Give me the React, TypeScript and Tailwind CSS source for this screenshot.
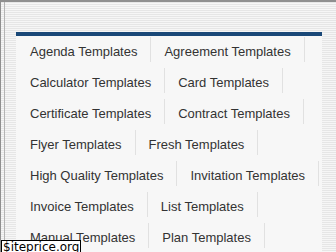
import React from "react";

const items = [
  "Agenda Templates",
  "Agreement Templates",
  "Calculator Templates",
  "Card Templates",
  "Certificate Templates",
  "Contract Templates",
  "Flyer Templates",
  "Fresh Templates",
  "High Quality Templates",
  "Invitation Templates",
  "Invoice Templates",
  "List Templates",
  "Manual Templates",
  "Plan Templates",
];

export default function App() {
  return (
    <div className="relative w-[336px] h-[252px] overflow-hidden border-t-2 border-l border-[#8f8f8f] bg-[repeating-linear-gradient(to_bottom,#e6e6e6_0px,#e6e6e6_1px,#f6f6f6_1px,#f6f6f6_2px)] font-['Liberation_Sans',Arial,sans-serif]">
      <div className="ml-[3px] h-full border-l border-[#b4b4b4] pl-[11px] pt-[30px]">
        {/* Template list panel */}
        <div className="w-[306px] overflow-hidden border-t-4 border-[#1a4878] bg-[#f7f7f7]">
          <ul className="flex w-[312px] flex-wrap pl-[1px]">
            {items.map((item) => (
              <li key={item} className="flex h-[31px]">
                <span className="px-[13px] text-[13px] leading-[31px] text-[#333] whitespace-nowrap">
                  {item}
                </span>
                <div className="mt-[1px] h-[25px] w-px bg-[#e1e1e1]" />
              </li>
            ))}
          </ul>
        </div>
      </div>

      {/* Watermark */}
      <div className="absolute left-0 top-[238px] border border-black bg-white px-[1px] text-[12px] leading-[13px] text-black font-['DejaVu_Sans',sans-serif]">
        $iteprice.org
      </div>
    </div>
  );
}
